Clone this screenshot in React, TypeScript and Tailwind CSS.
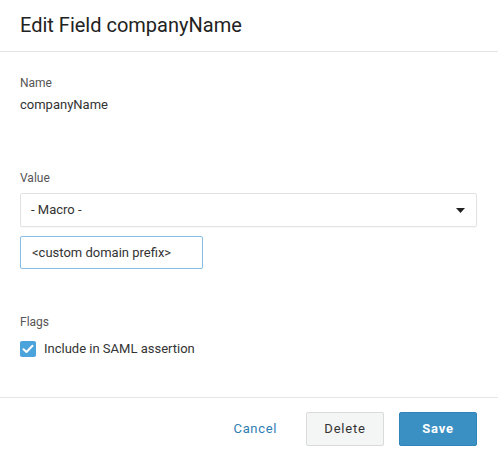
export default function App() {
  return (
    <div className="w-[498px] h-[459px] bg-white text-[#333] font-['Roboto',sans-serif] flex flex-col">
      {/* header */}
      <div className="h-[52px] px-5 flex items-center border-b border-[#e4e4e4] shrink-0">
        <h1 className="text-[20px] leading-[24px] text-[#222] font-normal -mt-[2px]">Edit Field companyName</h1>
      </div>

      {/* body */}
      <div className="px-5 pt-[23px] pb-[40px] border-b border-[#e4e4e4] flex flex-col">
        <div className="text-[12px] leading-[16px] text-[#555]">Name</div>
        <div className="mt-[5px] text-[13px] leading-[18px] text-[#333]">companyName</div>

        <div className="mt-[56px] text-[12px] leading-[16px] text-[#555]">Value</div>
        <div className="mt-[7px] h-[34px] w-[457px] border border-[#e2e2e2] rounded-[2px] flex items-center justify-between pl-[10px] pr-[10px] shadow-[0_1px_1px_rgba(0,0,0,0.03)]">
          <span className="text-[13px] text-[#333]">- Macro -</span>
          <svg width="9" height="5" viewBox="0 0 9 5" className="mr-[1px]">
            <path d="M0 0h9L4.5 5z" fill="#222" />
          </svg>
        </div>
        <div className="mt-[9px] h-[33px] w-[183px] border border-[#86bde6] rounded-[2px] flex items-center pl-[11px]">
          <span className="text-[13px] text-[#333]">&lt;custom domain prefix&gt;</span>
        </div>

        <div className="mt-[45px] text-[12px] leading-[16px] text-[#555]">Flags</div>
        <label className="mt-[11px] flex items-center gap-[8px]">
          <span className="w-[16px] h-[16px] rounded-[2px] bg-[#4ba3dc] flex items-center justify-center">
            <svg width="12" height="10" viewBox="0 0 12 10">
              <path d="M1.5 5.2 4.5 8 10.5 1.8" fill="none" stroke="#fff" strokeWidth="2" strokeLinecap="round" strokeLinejoin="round" />
            </svg>
          </span>
          <span className="text-[13px] leading-[16px] text-[#333]">Include in SAML assertion</span>
        </label>
      </div>

      {/* footer */}
      <div className="pt-[14px] pr-[21px] flex justify-end items-center">
        <button className="h-[34px] px-[10px] mr-[19px] text-[13px] tracking-[0.05em] text-[#2f7db3]">Cancel</button>
        <button className="h-[34px] w-[78px] mr-[15px] rounded-[2px] border border-[#dadada] bg-[#f4f5f5] text-[13px] tracking-[0.06em] text-[#333]">Delete</button>
        <button className="h-[34px] w-[78px] rounded-[2px] border border-[#2f84ba] bg-[#3b90c3] text-[13px] font-bold tracking-[0.06em] text-white">Save</button>
      </div>
    </div>
  );
}
